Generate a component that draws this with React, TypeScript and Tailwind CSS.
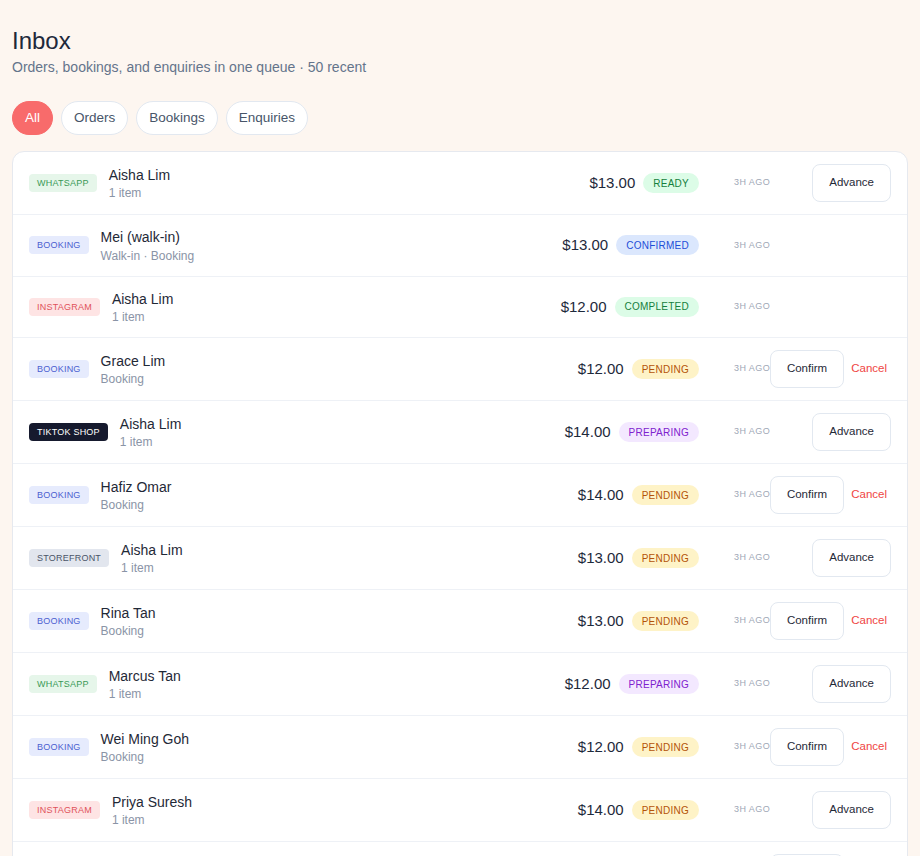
import React from "react";

type Row = {
  src: "WHATSAPP" | "BOOKING" | "INSTAGRAM" | "TIKTOK SHOP" | "STOREFRONT";
  name: string;
  sub: string;
  amount: string;
  status: "READY" | "CONFIRMED" | "COMPLETED" | "PENDING" | "PREPARING";
  action: "advance" | "confirm" | "none";
};

const rows: Row[] = [
  { src: "WHATSAPP", name: "Aisha Lim", sub: "1 item", amount: "$13.00", status: "READY", action: "advance" },
  { src: "BOOKING", name: "Mei (walk-in)", sub: "Walk-in · Booking", amount: "$13.00", status: "CONFIRMED", action: "none" },
  { src: "INSTAGRAM", name: "Aisha Lim", sub: "1 item", amount: "$12.00", status: "COMPLETED", action: "none" },
  { src: "BOOKING", name: "Grace Lim", sub: "Booking", amount: "$12.00", status: "PENDING", action: "confirm" },
  { src: "TIKTOK SHOP", name: "Aisha Lim", sub: "1 item", amount: "$14.00", status: "PREPARING", action: "advance" },
  { src: "BOOKING", name: "Hafiz Omar", sub: "Booking", amount: "$14.00", status: "PENDING", action: "confirm" },
  { src: "STOREFRONT", name: "Aisha Lim", sub: "1 item", amount: "$13.00", status: "PENDING", action: "advance" },
  { src: "BOOKING", name: "Rina Tan", sub: "Booking", amount: "$13.00", status: "PENDING", action: "confirm" },
  { src: "WHATSAPP", name: "Marcus Tan", sub: "1 item", amount: "$12.00", status: "PREPARING", action: "advance" },
  { src: "BOOKING", name: "Wei Ming Goh", sub: "Booking", amount: "$12.00", status: "PENDING", action: "confirm" },
  { src: "INSTAGRAM", name: "Priya Suresh", sub: "1 item", amount: "$14.00", status: "PENDING", action: "advance" },
  { src: "BOOKING", name: "Nur Aina", sub: "Booking", amount: "$13.00", status: "PENDING", action: "confirm" },
  { src: "STOREFRONT", name: "Marcus Tan", sub: "1 item", amount: "$12.00", status: "READY", action: "advance" },
];

const tagClass: Record<Row["src"], string> = {
  WHATSAPP: "bg-[#e6f6ea] text-[#3a9a58]",
  BOOKING: "bg-[#e6ebfd] text-[#4b60d0]",
  INSTAGRAM: "bg-[#fee4e4] text-[#e0525a]",
  "TIKTOK SHOP": "bg-[#161a2e] text-white",
  STOREFRONT: "bg-[#e2e6ee] text-[#4a5568]",
};

const pillClass: Record<Row["status"], string> = {
  READY: "bg-[#dcfce7] text-[#15803d]",
  CONFIRMED: "bg-[#dbe7fd] text-[#1d4ed8]",
  COMPLETED: "bg-[#dcfce7] text-[#15803d]",
  PENDING: "bg-[#fef3c7] text-[#b45309]",
  PREPARING: "bg-[#f3e8ff] text-[#7e22ce]",
};

export default function App() {
  const tabs = ["All", "Orders", "Bookings", "Enquiries"];
  return (
    <div
      className="min-h-screen bg-[#fdf6f0] px-3 pt-[25px] pb-6"
      style={{ fontFamily: '"Liberation Sans", Arial, sans-serif' }}
    >
      <h1 className="text-[24px] leading-8 font-normal text-[#1e293b]">Inbox</h1>
      <p className="text-[14px] leading-5 text-[#64748b]">
        Orders, bookings, and enquiries in one queue · 50 recent
      </p>

      <div className="mt-[24px] flex gap-2">
        {tabs.map((t, i) => (
          <button
            key={t}
            className={
              i === 0
                ? "h-[34px] rounded-full border border-[#f86b6b] bg-[#f86b6b] px-3 text-[13.5px] text-white"
                : "h-[34px] rounded-full border border-[#e2e8f0] bg-white px-3 text-[13.5px] text-[#475569]"
            }
          >
            {t}
          </button>
        ))}
      </div>

      <div className="mt-4 overflow-hidden rounded-xl border border-[#e6e9ef] bg-white">
        {rows.map((r, i) => (
          <div
            key={i}
            className="flex items-center border-b border-[#eef1f6] px-4 py-3"
          >
            <div className="flex min-w-0 flex-1 items-center gap-3">
              <span
                className={`rounded px-2 py-[3px] text-[9px] leading-3 tracking-wide whitespace-nowrap ${tagClass[r.src]}`}
              >
                {r.src}
              </span>
              <div className="min-w-0">
                <div className="text-[14px] leading-5 text-[#1f2937]">{r.name}</div>
                <div className="mt-[0.5px] text-[12px] leading-4 text-[#8a94a6]">{r.sub}</div>
              </div>
            </div>
            <div className="flex items-center gap-2">
              <span className="text-[15px] leading-5 text-[#1e293b]">{r.amount}</span>
              <span
                className={`flex h-5 items-center rounded-full px-2.5 text-[10px] tracking-wide ${pillClass[r.status]}`}
              >
                {r.status}
              </span>
            </div>
            <div className="ml-[35px] w-[35px] whitespace-nowrap text-[9px] tracking-wider text-[#a0a8b6]">
              3H AGO
            </div>
            <div className="flex w-[122px] items-center justify-end gap-[3px]">
              {r.action === "advance" && (
                <button className="h-[38px] rounded-lg border border-[#e2e8f0] bg-white px-4 text-[11.5px] text-[#1f2937]">
                  Advance
                </button>
              )}
              {r.action === "confirm" && (
                <>
                  <button className="h-[38px] rounded-lg border border-[#e2e8f0] bg-white px-4 text-[11.5px] text-[#1f2937]">
                    Confirm
                  </button>
                  <button className="px-1 text-[11.5px] text-[#ef4444]">Cancel</button>
                </>
              )}
            </div>
          </div>
        ))}
      </div>
    </div>
  );
}
